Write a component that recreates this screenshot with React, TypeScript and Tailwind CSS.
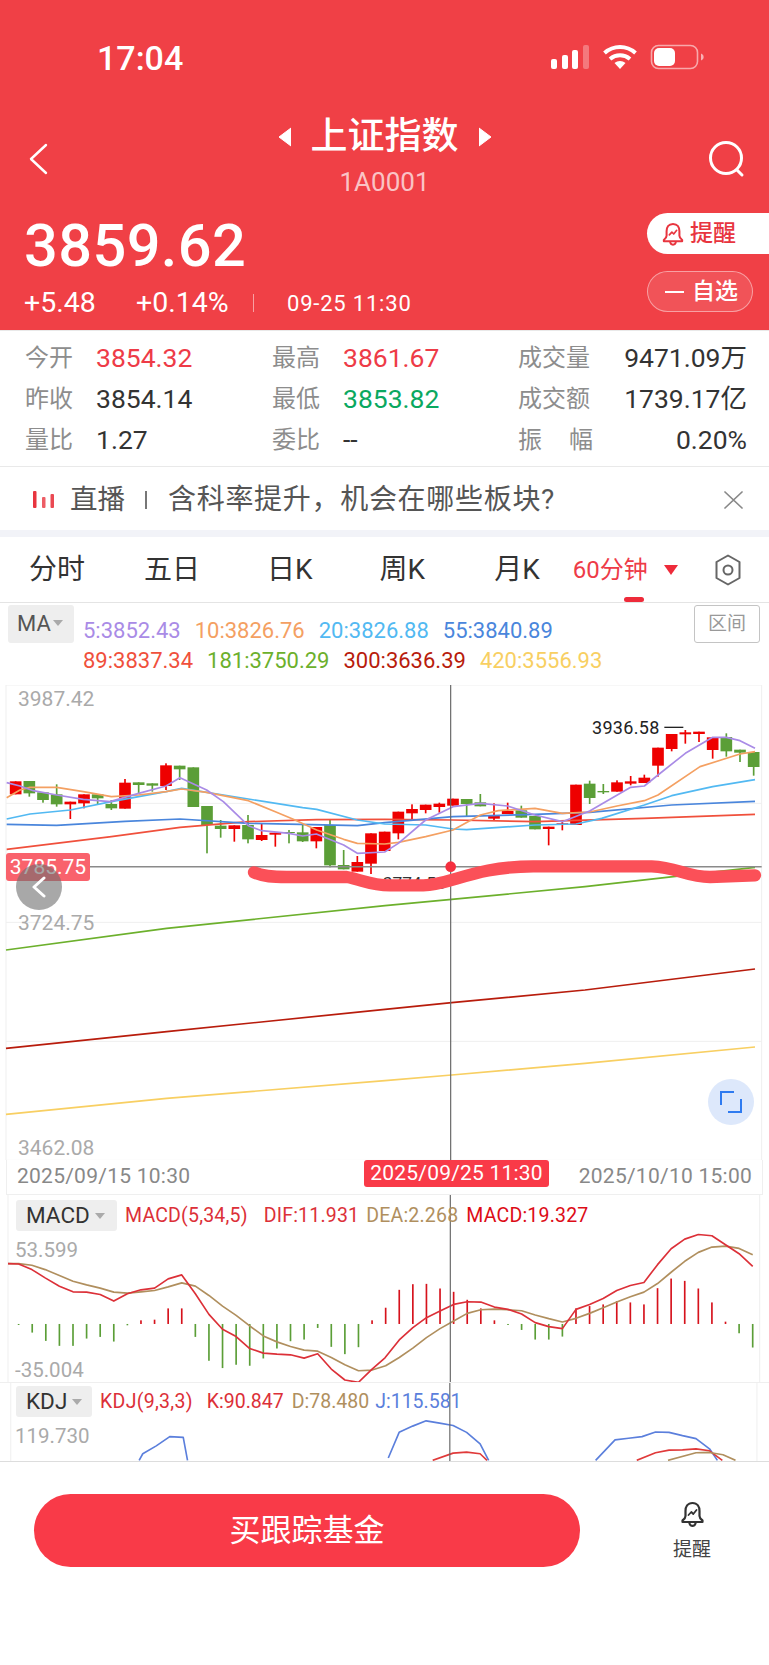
import React from "react";

const RED = "#ee0000";
const GREEN = "#5b9e37";

// type, body top, body bottom, wick top, wick bottom (3x units, from y=680)
const candles: [string, number, number, number, number][] = [
  ["r",304,343,304,343],["g",303,340,303,350],["g",337,360,337,368],["g",343,373,313,380],["r",365,373,365,417],
  ["r",343,370,343,385],["g",343,355,343,372],["g",372,385,360,390],["r",308,386,297,386],["g",307,315,307,340],
  ["g",310,317,310,335],["r",256,318,250,330],["g",257,268,257,300],["g",262,381,262,381],["g",378,435,378,520],
  ["g",437,447,420,473],["r",436,447,436,485],["g",435,478,405,490],["r",465,480,430,483],["r",458,464,458,500],
  ["g",456,459,450,490],["g",457,484,435,486],["r",441,484,441,505],["g",435,556,420,562],["g",555,568,510,568],
  ["r",546,575,528,575],["r",460,551,460,582],["r",455,513,455,513],["r",395,460,395,478],["r",387,400,373,418],
  ["r",374,390,374,400],["r",371,381,368,398],["r",356,377,356,377],["g",357,372,357,410],["g",367,379,342,379],
  ["r",405,416,370,422],["r",393,402,368,402],["g",391,413,377,413],["g",408,448,408,448],["r",440,447,440,496],
  ["r",430,434,425,451],["r",314,435,314,435],["g",311,354,302,372],["g",333,337,312,342],["r",307,335,301,335],
  ["r",304,311,288,316],["r",293,309,284,309],["r",203,257,203,290],["r",162,207,162,214],["r",157,163,150,191],
  ["r",155,162,155,186],["r",172,210,172,236],["g",171,214,160,230],["g",209,218,209,246],["g",216,261,216,287],
];

const lines: [string, string][] = [
  ["#f0503c", "20,508 334,470 540,442 745,425 949,419 1154,418 1359,420 1605,425 1933,415 2265,403"],
  ["#4a86dc", "20,433 170,436 375,424 540,417 745,430 1072,437 1154,428 1359,410 1605,403 1769,397 2015,375 2265,364"],
  ["#52b9f2", "20,417 90,402 211,390 334,365 498,335 545,325 745,357 908,383 950,388 1072,420 1154,432 1277,435 1359,447 1400,449 1605,435 1728,432 1805,415 1933,375 2015,347 2138,320 2265,299"],
  ["#f4a062", "20,353 60,330 90,322 170,322 250,335 334,350 416,345 498,335 545,327 620,337 745,362 826,395 880,418 950,450 1031,478 1072,490 1154,492 1195,487 1277,470 1359,450 1441,405 1495,392 1605,385 1687,400 1769,396 1851,378 1933,362 1974,345 2100,260 2220,222 2265,215"],
  ["#a98be6", "20,308 60,318 100,332 170,345 250,358 330,365 416,340 498,318 540,293 620,330 670,365 745,437 785,452 867,460 908,468 949,462 1031,495 1072,520 1154,516 1195,490 1277,420 1359,380 1441,370 1523,378 1605,405 1687,425 1769,393 1892,322 1933,318 1974,285 2056,220 2138,172 2179,172 2220,182 2265,205"],
];

const longLines: [string, string][] = [
  ["#6cb02c", "18,810 500,745 1155,677 1355,658 1755,620 2265,562"],
  ["#b81c0c", "18,1105 500,1055 1155,988 1355,968 1755,930 2265,867"],
  ["#f8cf62", "18,1303 500,1255 1155,1202 1355,1185 1755,1150 2265,1101"],
];

// x, tip y; baseline 524 (3x units, from y=1150)
const bars: [number, number, string][] = [
  [50,527,"g"],[91,550,"g"],[132,575,"g"],[173,590,"g"],[214,590,"g"],[255,568,"g"],[296,563,"g"],[337,577,"g"],[378,528,"g"],
  [419,513,"r"],[460,511,"r"],[501,477,"r"],[542,477,"r"],[583,563,"g"],[624,635,"g"],[665,657,"g"],[706,647,"g"],[747,650,"g"],
  [788,628,"g"],[829,598,"g"],[870,576,"g"],[911,571,"g"],[952,536,"g"],[993,593,"g"],[1034,615,"g"],[1075,594,"g"],[1116,513,"r"],
  [1157,475,"r"],[1198,421,"r"],[1239,404,"r"],[1280,403,"r"],[1321,417,"r"],[1362,427,"r"],[1403,451,"r"],[1444,477,"r"],[1485,513,"r"],
  [1526,527,"g"],[1567,542,"g"],[1608,571,"g"],[1649,571,"g"],[1690,562,"g"],[1731,477,"r"],[1772,470,"r"],[1813,465,"r"],[1854,455,"r"],
  [1895,459,"r"],[1936,465,"r"],[1977,416,"r"],[2018,387,"r"],[2059,394,"r"],[2100,417,"r"],[2141,459,"r"],[2182,517,"r"],[2223,552,"g"],[2264,595,"g"],
];

const dif = "18,342 50,343 90,360 130,385 173,410 214,427 255,428 296,435 337,455 378,433 419,421 460,416 501,388 542,376 583,433 624,495 665,540 706,562 747,598 788,612 829,615 870,617 911,627 952,614 993,660 1034,693 1075,700 1116,660 1155,626 1198,572 1239,535 1280,505 1321,485 1362,465 1403,457 1444,458 1485,473 1526,480 1567,494 1608,520 1649,532 1690,538 1731,480 1772,465 1813,447 1854,423 1895,408 1936,399 1977,345 2018,297 2059,268 2100,254 2141,258 2182,285 2223,312 2264,350";
const dea = "18,342 50,342 90,347 130,360 173,378 214,395 255,406 296,416 337,428 378,431 419,427 460,423 501,412 542,400 583,410 624,438 665,470 706,498 747,530 788,560 829,578 870,592 911,603 952,606 993,625 1034,647 1075,665 1116,663 1157,650 1198,625 1239,597 1280,565 1321,538 1362,515 1403,492 1444,481 1485,479 1526,481 1567,484 1608,497 1649,508 1690,518 1731,507 1772,492 1813,475 1854,458 1895,442 1936,428 1977,402 2018,368 2059,335 2100,308 2141,292 2182,289 2223,296 2264,315";

const kdjLines: [string, string][] = [
  ["#5b7fdc", "408,937 419,917 460,893 501,865 542,867 555,937"],
  ["#5b7fdc", "1165,930 1198,852 1239,833 1280,817 1321,824 1362,831 1403,852 1444,887 1470,937"],
  ["#5b7fdc", "1795,937 1854,875 1895,870 1936,865 1977,851 2018,852 2059,862 2100,871 2141,902 2165,937"],
  ["#e03a3a", "1300,937 1362,915 1403,912 1444,917 1465,937"],
  ["#e03a3a", "1920,937 1977,914 2018,906 2059,905 2100,902 2141,908 2180,937"],
  ["#b08f5e", "2015,937 2100,914 2141,913 2182,920 2220,937"],
];

function Bell({ color, stroke = "#e8353f" }: { color?: string; stroke?: string }) {
  return (
    <svg viewBox="0 0 24 26" fill="none" stroke={color ?? stroke} strokeWidth="2.200" strokeLinejoin="round" strokeLinecap="round" className="w-full h-full">
      <path d="M12 2C7 2 5 6 5 10v5c0 2-1 3-3 4.500V21h20v-1.500C20 18 19 17 19 15v-5c0-4-2-8-7-8z" />
      <path d="M9 22.500c.6 1.700 1.700 2.300 3 2.300s2.400-.6 3-2.300" />
      <path d="M8 14l2.800-3 2 2 3.200-4" strokeWidth="1.800" />
    </svg>
  );
}

function Tab({ className, children }: { className: string; children: React.ReactNode }) {
  return <span className={`text-[28px] leading-[36px] text-[#333] ${className}`}>{children}</span>;
}

function Stat({ label, value, valueClass, width }: { label: React.ReactNode; value: string; valueClass?: string; width: string }) {
  return (
    <div className={`flex items-center ${width}`}>
      <span className="text-[24px] leading-[30px] text-[#8d8d8d] shrink-0 w-[71px]">{label}</span>
      <span className={`text-[26.500px] leading-[30px] ${valueClass ?? "text-[#333]"}`}>{value}</span>
    </div>
  );
}

export default function App() {
  return (
    <div className="w-[769px] h-[1665px] bg-white overflow-hidden font-[Roboto,'Noto_Sans_CJK_SC',sans-serif]">
      {/* header */}
      <header className="h-[330px] bg-[#f04046] text-white">
        <div className="h-[112px] pt-[44px] pl-[97px] pr-[65px] flex justify-between items-start">
          <span className="text-[34px] leading-[28px] font-medium">17:04</span>
          <svg width="153" height="26" viewBox="0 0 153 26">
            <g fill="#fff">
              <rect x="0" y="15" width="6" height="10" rx="2" />
              <rect x="11" y="11" width="6" height="14" rx="2" />
              <rect x="21" y="6" width="6" height="19" rx="2" />
              <rect x="32" y="1" width="6" height="24" rx="2" fillOpacity="0.3" />
              <path d="M69 25l-5.500-6c3-2.700 8-2.700 11 0z" />
            </g>
            <g fill="none" stroke="#fff" strokeWidth="4">
              <path d="M53.500 9c9-8 22-8 31 0" />
              <path d="M59 15c6-5 14-5 20 0" />
            </g>
            <rect x="100.500" y="1.500" width="46" height="23" rx="7" fill="none" stroke="#fff" strokeOpacity="0.55" strokeWidth="1.600" />
            <rect x="103" y="4" width="21" height="18" rx="5" fill="#fff" />
            <path d="M150 9.500c2 .8 2.600 2.200 2.600 3.500s-.6 2.700-2.600 3.500z" fill="#fff" fillOpacity="0.6" />
          </svg>
        </div>
        <div className="h-[82px] grid grid-cols-[1fr_auto_1fr] items-center">
          <div className="pl-[29px]">
            <svg width="19" height="32" viewBox="0 0 19 32" fill="none" stroke="#fff" strokeWidth="2.400" strokeLinecap="round" strokeLinejoin="round" className="mt-[12px]">
              <path d="M17 2L2 16l15 14" />
            </svg>
          </div>
          <div className="flex flex-col items-center self-start pt-[2px]">
            <div className="flex items-center gap-[20px]">
              <svg width="13" height="20" viewBox="0 0 13 20"><path d="M13 1v18L1 10z" fill="#fff" stroke="#fff" strokeLinejoin="round" /></svg>
              <span className="text-[37px] leading-[46px] font-medium">上证指数</span>
              <svg width="13" height="20" viewBox="0 0 13 20"><path d="M0 1v18l12-9z" fill="#fff" stroke="#fff" strokeLinejoin="round" /></svg>
            </div>
            <span className="text-[26px] leading-[24px] mt-[10px] text-white/70">1A0001</span>
          </div>
          <div className="flex justify-end pr-[24px]">
            <svg width="37" height="37" viewBox="0 0 37 37" fill="none" stroke="#fff" strokeWidth="3" strokeLinecap="round" className="mt-[12px]">
              <circle cx="18" cy="17" r="15.500" />
              <path d="M29 29l5 5" />
            </svg>
          </div>
        </div>
        <div className="flex justify-between mt-[24px]">
          <div className="pl-[24px] flex flex-col">
            <span className="text-[59.500px] leading-[56px] font-medium tracking-[0.4px]">3859.62</span>
            <div className="flex items-center mt-[16px] h-[26px]">
              <span className="text-[28.500px] w-[112px]">+5.48</span>
              <span className="text-[28.500px] w-[117px]">+0.14%</span>
              <span className="w-px h-[18px] bg-white/50"></span>
              <span className="text-[22px] ml-[33px] tracking-[0.8px]">09-25 11:30</span>
            </div>
          </div>
          <div className="flex flex-col items-end -mt-[5px]">
            <div className="w-[122px] h-[41px] bg-white rounded-l-[21px] flex items-center pl-[15px] text-[#e8353f]">
              <span className="w-[22px] h-[24px]"><Bell /></span>
              <span className="text-[23px] leading-[30px] ml-[6px] font-medium">提醒</span>
            </div>
            <div className="w-[106px] h-[41px] mt-[17px] mr-[16px] rounded-[21px] border border-white/45 bg-white/10 flex items-center pl-[17px]">
              <span className="w-[19px] h-[2px] bg-white"></span>
              <span className="text-[23px] leading-[30px] ml-[8px] font-medium">自选</span>
            </div>
          </div>
        </div>
      </header>

      {/* stats */}
      <section className="h-[137px] pl-[25px] pr-[22px] pt-[6px] border-t border-b border-[#e9e9e9] flex flex-col">
        <div className="h-[41px] flex">
          <Stat width="w-[247px]" label="今开" value="3854.32" valueClass="text-[#ee3b47]" />
          <Stat width="w-[246px]" label="最高" value="3861.67" valueClass="text-[#ee3b47]" />
          <div className="flex-1 flex justify-between items-center"><span className="text-[24px] text-[#8d8d8d]">成交量</span><span className="text-[26.500px] text-[#333]">9471.09万</span></div>
        </div>
        <div className="h-[41px] flex">
          <Stat width="w-[247px]" label="昨收" value="3854.14" />
          <Stat width="w-[246px]" label="最低" value="3853.82" valueClass="text-[#0aa860]" />
          <div className="flex-1 flex justify-between items-center"><span className="text-[24px] text-[#8d8d8d]">成交额</span><span className="text-[26.500px] text-[#333]">1739.17亿</span></div>
        </div>
        <div className="h-[41px] flex">
          <Stat width="w-[247px]" label="量比" value="1.27" />
          <Stat width="w-[246px]" label="委比" value="--" />
          <div className="flex-1 flex justify-between items-center"><span className="text-[24px] text-[#8d8d8d] w-[75px] flex justify-between"><span>振</span><span>幅</span></span><span className="text-[26.500px] text-[#333]">0.20%</span></div>
        </div>
      </section>

      {/* live banner */}
      <section className="h-[63px] flex items-center pl-[33px] pr-[26px] pt-[3px]">
        <svg width="21" height="17" viewBox="0 0 21 17" className="mt-[-2px]">
          <rect x="0" y="0" width="3.500" height="17" rx="1" fill="#e8353f" />
          <rect x="9" y="6" width="3.500" height="11" rx="1" fill="#e8353f" fillOpacity="0.8" />
          <rect x="17.500" y="3" width="3.500" height="14" rx="1" fill="#e8353f" fillOpacity="0.9" />
        </svg>
        <span className="ml-[16px] text-[27.500px] leading-[34px] text-[#555]">直播</span>
        <span className="ml-[20px] w-[2px] h-[18px] bg-[#777]"></span>
        <span className="ml-[21px] text-[28px] leading-[34px] text-[#555] flex-1 tracking-[0.7px]">含科率提升，机会在哪些板块?</span>
        <svg width="19" height="18" viewBox="0 0 19 18" fill="none" stroke="#888" strokeWidth="1.700" strokeLinecap="round"><path d="M1 1l17 16M18 1L1 17" /></svg>
      </section>
      <div className="h-[7px] bg-[#f2f3f8]"></div>

      {/* period tabs */}
      <nav className="relative h-[66px] flex items-center border-b border-[#e4e4e4]">
        <Tab className="ml-[29px]">分时</Tab>
        <Tab className="ml-[59px]">五日</Tab>
        <Tab className="ml-[67px]">日K</Tab>
        <Tab className="ml-[67px]">周K</Tab>
        <Tab className="ml-[69px]">月K</Tab>
        <span className="ml-[33px] text-[24px] leading-[32px] text-[#ee3b47]">60分钟</span>
        <svg width="14" height="10" viewBox="0 0 14 10" className="ml-[16px]"><path d="M0 0h14L7 10z" fill="#ee2b3a" /></svg>
        <svg width="28" height="32" viewBox="0 0 28 32" fill="none" stroke="#666" strokeWidth="2" className="ml-[36px]">
          <path d="M14 1.500l11.500 6.500v16L14 30.500 2.500 24V8z" strokeLinejoin="round" />
          <circle cx="14" cy="16" r="4.500" />
        </svg>
        <span className="absolute left-[624px] bottom-0 w-[20px] h-[5px] rounded-full bg-[#ee2b3a]"></span>
      </nav>

      {/* MA legend */}
      <section className="h-[82px] flex pl-[8px] pr-[9px] pt-[2px]">
        <div className="w-[66px] h-[38px] bg-[#eeeeee] rounded-[3px] flex items-center pl-[9px]">
          <span className="text-[22px] leading-[26px] text-[#555]">MA</span>
          <span className="ml-[2px] mt-[-2px] w-0 h-0 border-x-[5px] border-x-transparent border-t-[6px] border-t-[#aaa]"></span>
        </div>
        <div className="ml-[9px] pt-[11px] text-[22px] leading-[30px] flex-1">
          <div className="flex gap-[14px]">
            <span className="text-[#a98be6]">5:3852.43</span>
            <span className="text-[#f4a062]">10:3826.76</span>
            <span className="text-[#52b9f2]">20:3826.88</span>
            <span className="text-[#4a86dc]">55:3840.89</span>
          </div>
          <div className="flex gap-[14px]">
            <span className="text-[#f0503c]">89:3837.34</span>
            <span className="text-[#6cb02c]">181:3750.29</span>
            <span className="text-[#b81c0c]">300:3636.39</span>
            <span className="text-[#f8cf62]">420:3556.93</span>
          </div>
        </div>
        <div className="w-[66px] h-[38px] border border-[#c4c4c4] rounded-[3px] flex items-center justify-center text-[19px] text-[#999]">区间</div>
      </section>

      {/* main chart */}
      <section className="relative h-[475px]">
        <svg viewBox="0 15 2307 1425" className="block w-full h-full">
          <g stroke="#efefef" strokeWidth="3">
            <path d="M18 15H2285" fill="none" />
            <path d="M18 370H2285" fill="none" />
            <path d="M18 727H2285" fill="none" />
            <path d="M18 1084H2285" fill="none" />
            <path d="M18 1441H2285" fill="none" />
            <path d="M18 15V1441" fill="none" />
            <path d="M2285 15V1441" fill="none" />
          </g>
          {longLines.map(([c, p]) => (
            <polyline key={c} points={p} fill="none" stroke={c} strokeWidth="5" />
          ))}
          {candles.map(([t, top, bot, wt, wb], i) => {
            const x = 47 + 41 * i;
            const c = t === "r" ? RED : GREEN;
            return (
              <g key={i} fill={c}>
                <rect x={x - 2.5} y={wt} width="5" height={wb - wt} />
                <rect x={x - 17.5} y={top} width="35" height={bot - top} />
              </g>
            );
          })}
          {lines.map(([c, p]) => (
            <polyline key={c} points={p} fill="none" stroke={c} strokeWidth="5" strokeLinejoin="round" />
          ))}
          <path d="M18 560H2285" stroke="#8a8a8a" strokeWidth="4.500" fill="none" />
          <path d="M1352 15V1441" stroke="#666" strokeWidth="3.500" fill="none" />
          <path d="M1993 142h57" stroke="#222" strokeWidth="4" fill="none" />
          <text x="1148" y="626" fontSize="52" fill="#333">3774.58</text>
          <path d="M762 577C790 590 820 591 860 591L1040 591C1090 600 1110 616 1170 616L1270 616C1350 616 1420 560 1600 559L1955 559C2030 561 2060 591 2130 591L2265 586" fill="none" stroke="#fb5058" strokeWidth="37" strokeLinecap="round" strokeLinejoin="round" />
          <circle cx="1352" cy="560" r="16" fill="#f5303f" />
        </svg>
        <span className="absolute left-[18px] top-[4px] text-[#aaaaaa] text-[21px] leading-[20px]">3987.42</span>
        <span className="absolute left-[18px] top-[228px] text-[#aaaaaa] text-[21px] leading-[20px]">3724.75</span>
        <span className="absolute left-[18px] top-[453px] text-[#aaaaaa] text-[21px] leading-[20px]">3462.08</span>
        <span className="absolute left-[592px] top-[33px] text-[#222] text-[18px] leading-[20px] tracking-[0.3px]">3936.58</span>
        <span className="absolute left-[6px] top-[168px] w-[84px] h-[28px] rounded-[3px] bg-[#f9626c] text-white text-[21px] leading-[28px] text-center">3785.75</span>
        <span className="absolute left-[16px] top-[179px] w-[46px] h-[46px] rounded-full bg-[#6e6e6e]/60 flex items-center justify-center">
          <svg width="14" height="22" viewBox="0 0 14 22" fill="none" stroke="#fff" strokeWidth="3" strokeLinecap="round" strokeLinejoin="round"><path d="M12 2L2 11l10 9" /></svg>
        </span>
        <span className="absolute left-[708px] top-[394px] w-[46px] h-[46px] rounded-full bg-[#dde8fb] flex items-center justify-center">
          <svg width="22" height="22" viewBox="0 0 22 22" fill="none" stroke="#2f7bf0" strokeWidth="2"><path d="M14 1H1v13M8 21h13V8" /></svg>
        </span>
      </section>

      {/* date axis */}
      <section className="relative h-[35px] mx-[6px] pl-[10px] pr-[10px] flex items-center justify-between border-b border-[#efefef] border-l border-r text-[21px] text-[#888]">
        <span className="tracking-[0.25px]">2025/09/15 10:30</span>
        <span className="tracking-[0.25px]">2025/10/10 15:00</span>
        <span className="absolute left-[357px] top-0 w-[185px] h-[27px] rounded-[3px] bg-[#f93a48] text-white leading-[27px] text-center tracking-[0.2px]">2025/09/25 11:30</span>
      </section>

      {/* MACD */}
      <section className="relative h-[188px] border-b border-[#efefef]">
        <svg viewBox="0 135 2307 564" className="absolute inset-0 w-full h-full">
          <path d="M18 135V699M2285 135V699" stroke="#efefef" strokeWidth="3" fill="none" />
          {bars.map(([x, y, t]) => (
            <rect key={x} x={x - 2.5} y={Math.min(y, 524)} width="5" height={Math.abs(y - 524)} fill={t === "r" ? "#d6121c" : GREEN} />
          ))}
          <polyline points={dea} fill="none" stroke="#b08f5e" strokeWidth="5" strokeLinejoin="round" />
          <polyline points={dif} fill="none" stroke="#dc3038" strokeWidth="5" strokeLinejoin="round" />
          <path d="M1352 135V699" stroke="#666" strokeWidth="3.500" fill="none" />
        </svg>
        <div className="relative flex items-center pl-[16px] pt-[5px] text-[19.500px] leading-[31px]">
          <div className="w-[101px] h-[31px] bg-[#eeeeee] rounded-[3px] flex items-center pl-[10px]">
            <span className="text-[22.500px] text-[#333]">MACD</span>
            <span className="ml-[5px] w-0 h-0 border-x-[5px] border-x-transparent border-t-[6px] border-t-[#aaa]"></span>
          </div>
          <span className="ml-[8px] text-[#dc3038] tracking-[0.2px]">MACD(5,34,5)</span>
          <span className="ml-[16px] text-[#dc3038] tracking-[0.2px]">DIF:11.931</span>
          <span className="ml-[7px] text-[#b08f5e] tracking-[0.2px]">DEA:2.268</span>
          <span className="ml-[8px] text-[#dd0c16] tracking-[0.2px]">MACD:19.327</span>
        </div>
        <span className="absolute left-[15px] top-[45px] text-[20.500px] leading-[20px] text-[#aaaaaa]">53.599</span>
        <span className="absolute left-[15px] top-[165px] text-[20.500px] leading-[20px] text-[#aaaaaa]">-35.004</span>
      </section>

      {/* KDJ */}
      <section className="relative h-[79px] border-b border-[#dddddd] overflow-hidden">
        <svg viewBox="0 702 2307 237" className="absolute inset-0 w-full h-full">
          <path d="M18 702V939M2285 702V939" stroke="#efefef" strokeWidth="3" fill="none" />
          {kdjLines.map(([c, p]) => (
            <polyline key={p} points={p} fill="none" stroke={c} strokeWidth="5" strokeLinejoin="round" />
          ))}
          <path d="M1352 702V939" stroke="#666" strokeWidth="3.500" fill="none" />
        </svg>
        <div className="relative flex items-center pl-[16px] pt-[3px] text-[19.500px] leading-[31px]">
          <div className="w-[76px] h-[31px] bg-[#eeeeee] rounded-[3px] flex items-center pl-[10px]">
            <span className="text-[22.500px] text-[#333]">KDJ</span>
            <span className="ml-[5px] w-0 h-0 border-x-[5px] border-x-transparent border-t-[6px] border-t-[#aaa]"></span>
          </div>
          <span className="ml-[8px] text-[#dc3038] tracking-[0.3px]">KDJ(9,3,3)</span>
          <span className="ml-[14px] text-[#dc3038]">K:90.847</span>
          <span className="ml-[8px] text-[#b08f5e]">D:78.480</span>
          <span className="ml-[6px] text-[#5b7fdc]">J:115.581</span>
        </div>
        <span className="absolute left-[15px] top-[43px] text-[20.500px] leading-[20px] text-[#aaaaaa]">119.730</span>
      </section>

      {/* bottom bar */}
      <footer className="flex items-start pl-[34px] pt-[32px]">
        <button className="w-[546px] h-[73px] rounded-full bg-[#f93a48] text-white text-[31px] leading-[73px] text-center">买跟踪基金</button>
        <div className="ml-[92px] w-[40px] flex flex-col items-center pt-[7px]">
          <span className="w-[25px] h-[26px]"><Bell color="#333" /></span>
          <span className="mt-[12px] text-[19px] leading-[22px] text-[#444] whitespace-nowrap">提醒</span>
        </div>
      </footer>
    </div>
  );
}
